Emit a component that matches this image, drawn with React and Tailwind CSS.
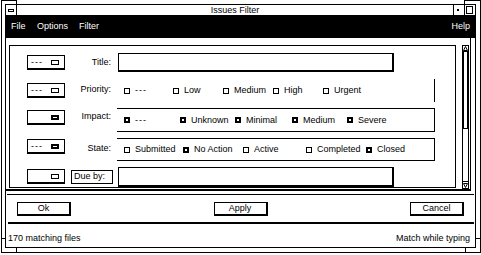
import React from "react";

function Sel({ dashes, bold, className = "" }) {
  return (
    <div className={`w-[38px] h-[15px] shrink-0 border border-b-2 border-black flex items-center ${className}`}>
      {dashes && <span className="ml-[3px] text-[9px] tracking-[1px] leading-none">---</span>}
      <span className={`ml-auto mr-[5px] w-[8px] h-[5px] border-black ${bold ? "border-2" : "border"}`} />
    </div>
  );
}

function Cb({ label, bold, className = "" }) {
  return (
    <div className={`flex items-center shrink-0 ${className}`}>
      <span className={`w-[6px] h-[6px] shrink-0 border-black ${bold ? "border-2" : "border"}`} />
      <span className={`ml-[5px] leading-none ${label === "---" ? "tracking-[1px]" : ""}`}>{label}</span>
    </div>
  );
}

function Label({ children, className = "" }) {
  return <div className={`w-[48px] shrink-0 text-right pr-[2px] leading-none ${className}`}>{children}</div>;
}

export default function App() {
  return (
    <div className="w-[481px] h-[255px] bg-white pl-[1px] text-black font-['Liberation_Sans',Arial,sans-serif] text-[9px] leading-none overflow-hidden select-none">
      <div className="relative w-[480px] h-[253px] border-l border-r border-b border-black flex flex-col">
        {/* top frame corners */}
        <div className="h-[4px] flex shrink-0">
          <div className="w-[15px] border-t border-r border-black" />
          <div className="flex-1" />
          <div className="w-[16px] border-t border-l border-black" />
        </div>

        {/* window */}
        <div className="ml-[3px] mr-[4px] h-[244px] shrink-0 border border-black flex flex-col">
          {/* title bar */}
          <div className="h-[10px] flex shrink-0">
            <div className="w-[11px] border-r border-black flex items-start">
              <div className="mt-[4px] ml-[2px] w-[6px] h-[3px] border border-black" />
            </div>
            <div className="flex-1 flex items-center justify-center leading-none">Issues Filter</div>
            <div className="w-[11px] border-l border-black flex items-start">
              <div className="mt-[4px] ml-[3px] w-[2px] h-[2px] bg-black" />
            </div>
            <div className="w-[11px] border-l border-black flex items-start">
              <div className="mt-[1px] ml-[1px] w-[7px] h-[8px] border border-black" />
            </div>
          </div>

          {/* menubar */}
          <div className="h-[23px] shrink-0 bg-black text-white flex items-center pl-[5px] pr-[5px]">
            <span className="w-[26px]">File</span>
            <span className="w-[42px]">Options</span>
            <span>Filter</span>
            <span className="ml-auto">Help</span>
          </div>

          {/* main scrolled area */}
          <div className="w-[465px] h-[153px] shrink-0 border-r border-b-2 border-black flex items-start">
            <div className="ml-[3px] mt-[7px] w-[447px] h-[143px] shrink-0 border border-black flex flex-col pt-[6px] overflow-hidden">
              {/* Title */}
              <div className="h-[21px] flex items-center shrink-0">
                <Sel dashes className="ml-[17px]" />
                <Label>Title:</Label>
                <div className="ml-[5px] w-[276px] h-[19px] border border-r-2 border-b-2 border-black" />
              </div>
              {/* Priority */}
              <div className="mt-[6px] h-[23px] flex items-center shrink-0">
                <Sel dashes className="ml-[17px]" />
                <Label className="mb-[3px]">Priority:</Label>
                <div className="ml-[4px] w-[318px] h-full border-r border-black flex items-center pl-[7px]">
                  <Cb label="---" className="w-[49px]" />
                  <Cb label="Low" className="w-[50px]" />
                  <Cb label="Medium" className="w-[50px]" />
                  <Cb label="High" className="w-[50px]" />
                  <Cb label="Urgent" />
                </div>
              </div>
              {/* Impact */}
              <div className="mt-[6px] h-[24px] flex items-center shrink-0">
                <Sel bold className="ml-[17px] self-start mt-[2px]" />
                <Label className="self-start mt-[4px]">Impact:</Label>
                <div className="ml-[4px] w-[318px] h-full border-t border-b border-r border-black flex items-center pl-[7px]">
                  <Cb bold label="---" className="w-[56px]" />
                  <Cb bold label="Unknown" className="w-[55px]" />
                  <Cb bold label="Minimal" className="w-[57px]" />
                  <Cb bold label="Medium" className="w-[55px]" />
                  <Cb bold label="Severe" />
                </div>
              </div>
              {/* State */}
              <div className="mt-[6px] h-[23px] flex items-center shrink-0">
                <Sel dashes bold className="ml-[17px] self-start mt-[1px]" />
                <Label className="mb-[2px]">State:</Label>
                <div className="ml-[4px] w-[318px] h-full border-t border-b border-r border-black flex items-center pl-[7px]">
                  <Cb label="Submitted" className="w-[59px]" />
                  <Cb bold label="No Action" className="w-[60px]" />
                  <Cb label="Active" className="w-[63px]" />
                  <Cb label="Completed" className="w-[60px]" />
                  <Cb bold label="Closed" />
                </div>
              </div>
              {/* Due by */}
              <div className="mt-[5px] h-[21px] flex items-center shrink-0">
                <Sel className="ml-[17px]" />
                <div className="ml-[6px] w-[42px] h-[14px] shrink-0 border border-black flex items-center pl-[2px] leading-none">Due by:</div>
                <div className="ml-[5px] w-[276px] h-[20px] border border-r-2 border-b-2 border-black" />
              </div>
            </div>

            {/* scrollbar */}
            <div className="ml-[6px] mt-[7px] w-[7px] h-[144px] shrink-0 border border-black flex flex-col">
              <div className="h-[6px] border-b border-black flex items-start justify-center">
                <svg width="5" height="5" viewBox="0 0 5 5">
                  <path d="M2.5 0.5 L4.5 4.5 L0.5 4.5 Z" fill="none" stroke="black" strokeWidth="1" />
                </svg>
              </div>
              <div className="h-[77px] border-x border-b border-black" />
              <div className="flex-1" />
              <div className="h-[7px] border-t border-black flex items-end justify-center">
                <svg width="5" height="5" viewBox="0 0 5 5">
                  <path d="M0.5 0.5 L4.5 0.5 L2.5 4.5 Z" fill="none" stroke="black" strokeWidth="1" />
                </svg>
              </div>
            </div>
          </div>

          {/* bottom area */}
          <div className="mt-[3px] mx-[1px] border-t border-black shrink-0" />
          <div className="mt-[7px] h-[14px] flex justify-between px-[11px] shrink-0">
            <div className="w-[54px] h-[14px] border border-r-2 border-b-2 border-black flex items-center justify-center">Ok</div>
            <div className="w-[54px] h-[14px] border border-r-2 border-b-2 border-black flex items-center justify-center">Apply</div>
            <div className="w-[54px] h-[14px] border border-r-2 border-b-2 border-black flex items-center justify-center">Cancel</div>
          </div>
          <div className="mt-[6px] ml-[2px] mr-[1px] h-[2px] bg-black shrink-0" />
          <div className="h-[23px] flex justify-between items-start pt-[10px] pl-[2px] pr-[5px] shrink-0">
            <span>170 matching files</span>
            <span>Match while typing</span>
          </div>
        </div>

        {/* bottom frame corners */}
        <div className="h-[4px] flex shrink-0">
          <div className="w-[15px] border-r border-black" />
          <div className="flex-1" />
          <div className="w-[15px] border-l border-black" />
        </div>

        {/* resize handle ticks */}
        <div className="absolute left-0 top-[238px] w-[3px] h-[1px] bg-black" />
        <div className="absolute right-0 top-[238px] w-[4px] h-[1px] bg-black" />
      </div>
    </div>
  );
}
